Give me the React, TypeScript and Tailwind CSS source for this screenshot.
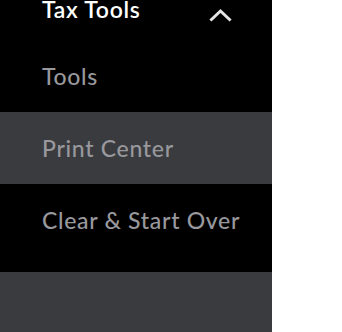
import React from "react";

const items = [
  { label: "Tools", active: false },
  { label: "Print Center", active: true },
  { label: "Clear & Start Over", active: false },
];

const App: React.FC = () => {
  return (
    <div
      className="w-[342px] h-[332px] bg-white overflow-hidden"
      style={{ fontFamily: "Lato, 'Noto Sans', sans-serif" }}
    >
      <div className="w-[272px] h-full bg-black flex flex-col">
        {/* Section header */}
        <div className="h-[40px] flex items-start justify-between pl-[42px] pr-[40px] -mt-[5px]">
          <span className="text-[23px] leading-[28px] font-semibold tracking-[0.7px] text-white">
            Tax Tools
          </span>
          <svg
            className="mt-[13px]"
            width="23"
            height="14"
            viewBox="0 0 23 14"
            fill="none"
            stroke="#e6e6e6"
            strokeWidth="3"
            strokeLinecap="square"
          >
            <path d="M2.5 11.5 L11.5 3 L20.5 11.5" />
          </svg>
        </div>

        {/* Sub items */}
        <div className="flex flex-col mt-[5px]">
          {items.map((item, index) => (
            <div
              key={index}
              className={`h-[72px] flex items-center pl-[42px] ${
                item.active ? "bg-[#3a3b3f]" : "bg-black"
              }`}
            >
              <span className="text-[23px] font-medium tracking-[0.7px] text-[#98989d]">
                {item.label}
              </span>
            </div>
          ))}
        </div>

        <div className="h-[16px]" />
        <div className="flex-1 bg-[#3a3b3f]" />
      </div>
    </div>
  );
};

export default App;
